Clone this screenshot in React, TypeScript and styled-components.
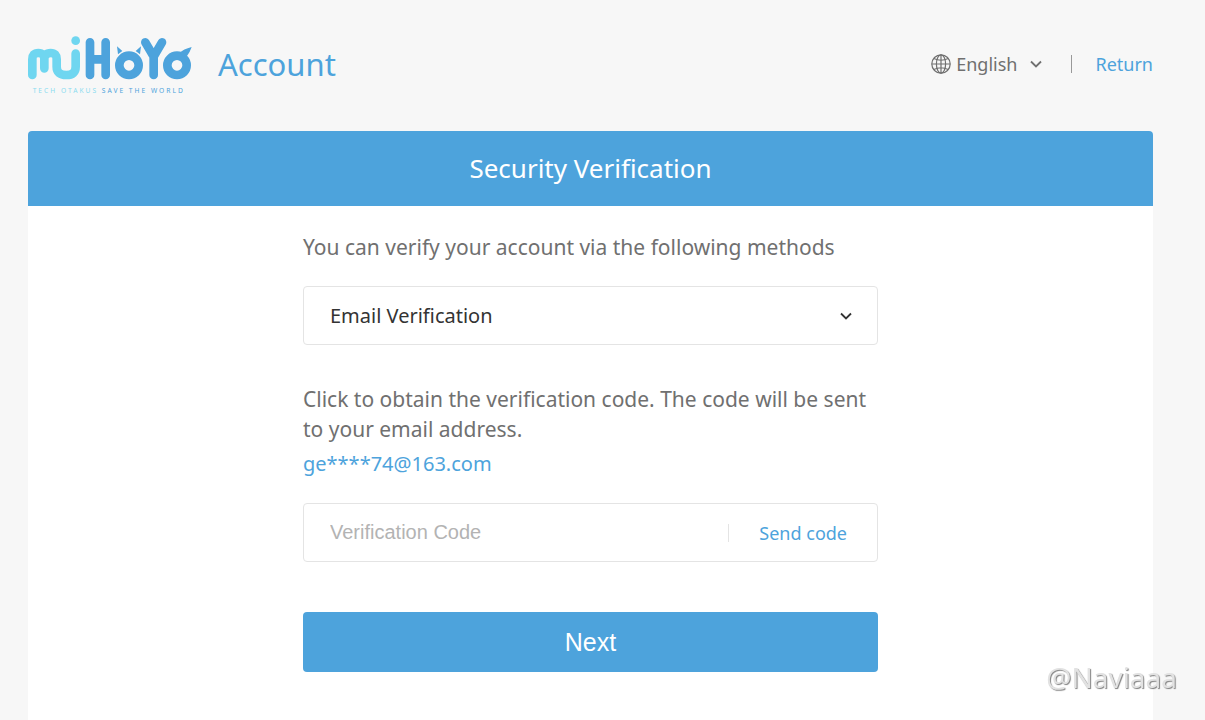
import React, { useState } from "react";
import styled, { createGlobalStyle } from "styled-components";

const blue = "#4da3dc";
const sans = '"Noto Sans", "Open Sans", sans-serif';

const GlobalStyle = createGlobalStyle`
  *, *::before, *::after { box-sizing: border-box; }
  html, body { margin: 0; }
  body {
    min-height: 100vh;
    background: #f7f7f7;
    color: #707070;
    font-family: ${sans};
  }
  #root { min-height: 100vh; display: flex; }
  h1, h2, p { margin: 0; font-weight: 400; }
  button, input, select { font: inherit; border: 0; margin: 0; padding: 0; background: none; }
  button, select { cursor: pointer; }
`;

const Page = styled.div`
  flex: 1;
  min-width: 0;
  display: flex;
  flex-direction: column;
  padding: 0 52px 0 28px;
`;

const Header = styled.header`
  display: flex;
  align-items: center;
  height: 131px;
  padding-bottom: 3px;
`;

const LogoLink = styled.a`
  display: block;
  line-height: 0;
`;

const Tagline = styled.text`
  font-family: ${sans};
  font-size: 20px;
  letter-spacing: 6px;
`;

const PageTitle = styled.h1`
  margin-left: 26px;
  color: ${blue};
  font-size: 31px;
  line-height: 40px;
`;

const HeaderNav = styled.nav`
  display: flex;
  align-items: center;
  margin-left: auto;
  font-size: 18px;
  line-height: 28px;
`;

const LanguageButton = styled.button`
  display: flex;
  align-items: center;
  gap: 5px;
  color: #707070;
`;

const LanguageChevron = styled.span`
  display: flex;
  margin-left: 8px;
`;

const NavDivider = styled.span`
  width: 1px;
  height: 18px;
  margin: 0 23px 0 29px;
  background: #999;
`;

const TextLink = styled.a`
  color: ${blue};
  text-decoration: none;
`;

const Card = styled.main`
  flex: 1;
  background: #fff;
  border-radius: 4px 4px 0 0;
  overflow: hidden;
`;

const CardHeader = styled.h2`
  padding: 18px;
  background: ${blue};
  color: #fff;
  font-size: 26px;
  line-height: 39px;
  text-align: center;
`;

const Form = styled.form`
  display: flex;
  flex-direction: column;
  width: 100%;
  max-width: 575px;
  margin: 0 auto;
  padding: 26px 0 48px;
`;

const Copy = styled.p`
  font-size: 21px;
  line-height: 30px;
`;

const MethodLabel = styled.label`
  font-size: 21px;
  line-height: 30px;
`;

const Email = styled.p`
  margin-top: 5px;
  color: ${blue};
  font-size: 20px;
  line-height: 30px;
`;

const Field = styled.div`
  display: flex;
  align-items: center;
  height: 59px;
  border: 1px solid #e4e4e4;
  border-radius: 4px;
`;

const SelectField = styled(Field)`
  display: grid;
  margin: 24px 0 39px;
  & > * { grid-area: 1 / 1; }
`;

const MethodSelect = styled.select`
  appearance: none;
  width: 100%;
  height: 100%;
  padding: 0 60px 0 26px;
  color: #333;
  font-size: 20px;
`;

const SelectChevron = styled.span`
  display: flex;
  justify-self: end;
  margin-right: 25px;
  pointer-events: none;
`;

const CodeField = styled(Field)`
  margin: 24px 0 50px;
`;

const CodeInput = styled.input`
  flex: 1;
  min-width: 0;
  height: 100%;
  padding: 0 26px;
  outline: none;
  color: #333;
  font-family: "Liberation Sans", Arial, sans-serif;
  font-size: 20px;
  &::placeholder { color: #b3b3b3; opacity: 1; }
`;

const SendButton = styled.button`
  padding: 0 30px;
  border-left: 1px solid #e4e4e4;
  color: ${blue};
  font-size: 18px;
  line-height: 18px;
`;

const NextButton = styled.button`
  height: 60px;
  border-radius: 4px;
  background: ${blue};
  color: #fff;
  font-family: "Liberation Sans", Arial, sans-serif;
  font-size: 25px;
`;

const Watermark = styled.span`
  position: fixed;
  right: 28px;
  bottom: 23px;
  color: #e2e2e2;
  font-size: 28px;
  line-height: 40px;
  text-shadow: 1px 1px 1px #808080;
  pointer-events: none;
`;

function Logo() {
  return (
    <svg width="164" height="62" viewBox="24 24 492 186" role="img" aria-label="miHoYo">
      <g fill="none" strokeLinecap="round" strokeLinejoin="round" strokeWidth="26">
        <g stroke="#6fd6f0">
          <path d="M37 150V103Q37 84 55 84Q73 84 73 103V130V103Q73 84 92 84Q110 84 110 103V125Q110 150 139 150Q167 150 167 125V86" />
          <path d="M167 47h.1" />
        </g>
        <g stroke={blue}>
          <path d="M210 52V150M257 52V150M210 103H257" />
          <circle cx="327" cy="121" r="29" />
          <path d="M376 52L401 95L426 52M401 95V150" />
          <circle cx="471" cy="121" r="29" />
        </g>
      </g>
      <g fill={blue}>
        <path d="M291 64L307 78L294 88ZM363 64L347 78L360 88ZM478 84Q490 72 515 66Q510 82 499 96Z" />
      </g>
      <Tagline x="38" y="203" fill="#8adcf0">
        TECH OTAKUS{" "}
        <tspan fill={blue}>SAVE THE WORLD</tspan>
      </Tagline>
    </svg>
  );
}

function Globe() {
  return (
    <svg width="20" height="20" viewBox="0 0 20 20" fill="none" stroke="#707070" strokeWidth="1.2" aria-hidden="true">
      <circle cx="10" cy="10" r="9.2" />
      <ellipse cx="10" cy="10" rx="4.6" ry="9.2" />
      <path d="M10 .8V19.2M.8 10H19.2M2.8 4.5Q10 8 17.2 4.5M2.8 15.5Q10 12 17.2 15.5" />
    </svg>
  );
}

function Chevron({ color }: { color: string }) {
  return (
    <svg width="12" height="12" viewBox="0 0 12 12" fill="none" stroke={color} strokeWidth="1.8" aria-hidden="true">
      <path d="M1 3.5L6 8.5L11 3.5" />
    </svg>
  );
}

export default function App() {
  const [code, setCode] = useState("");
  return (
    <>
      <GlobalStyle />
      <Page>
        <Header>
          <LogoLink href="#">
            <Logo />
          </LogoLink>
          <PageTitle>Account</PageTitle>
          <HeaderNav>
            <LanguageButton type="button">
              <Globe />
              English
              <LanguageChevron>
                <Chevron color="#707070" />
              </LanguageChevron>
            </LanguageButton>
            <NavDivider />
            <TextLink href="#">Return</TextLink>
          </HeaderNav>
        </Header>
        <Card>
          <CardHeader>Security Verification</CardHeader>
          <Form onSubmit={(e) => e.preventDefault()}>
            <MethodLabel htmlFor="method">You can verify your account via the following methods</MethodLabel>
            <SelectField>
              <MethodSelect id="method">
                <option>Email Verification</option>
              </MethodSelect>
              <SelectChevron>
                <Chevron color="#333" />
              </SelectChevron>
            </SelectField>
            <Copy>Click to obtain the verification code. The code will be sent to your email address.</Copy>
            <Email>ge****74@163.com</Email>
            <CodeField>
              <CodeInput
                aria-label="Verification Code"
                placeholder="Verification Code"
                value={code}
                onChange={(e) => setCode(e.target.value)}
              />
              <SendButton type="button">Send code</SendButton>
            </CodeField>
            <NextButton type="submit">Next</NextButton>
          </Form>
        </Card>
        <Watermark>@Naviaaa</Watermark>
      </Page>
    </>
  );
}
